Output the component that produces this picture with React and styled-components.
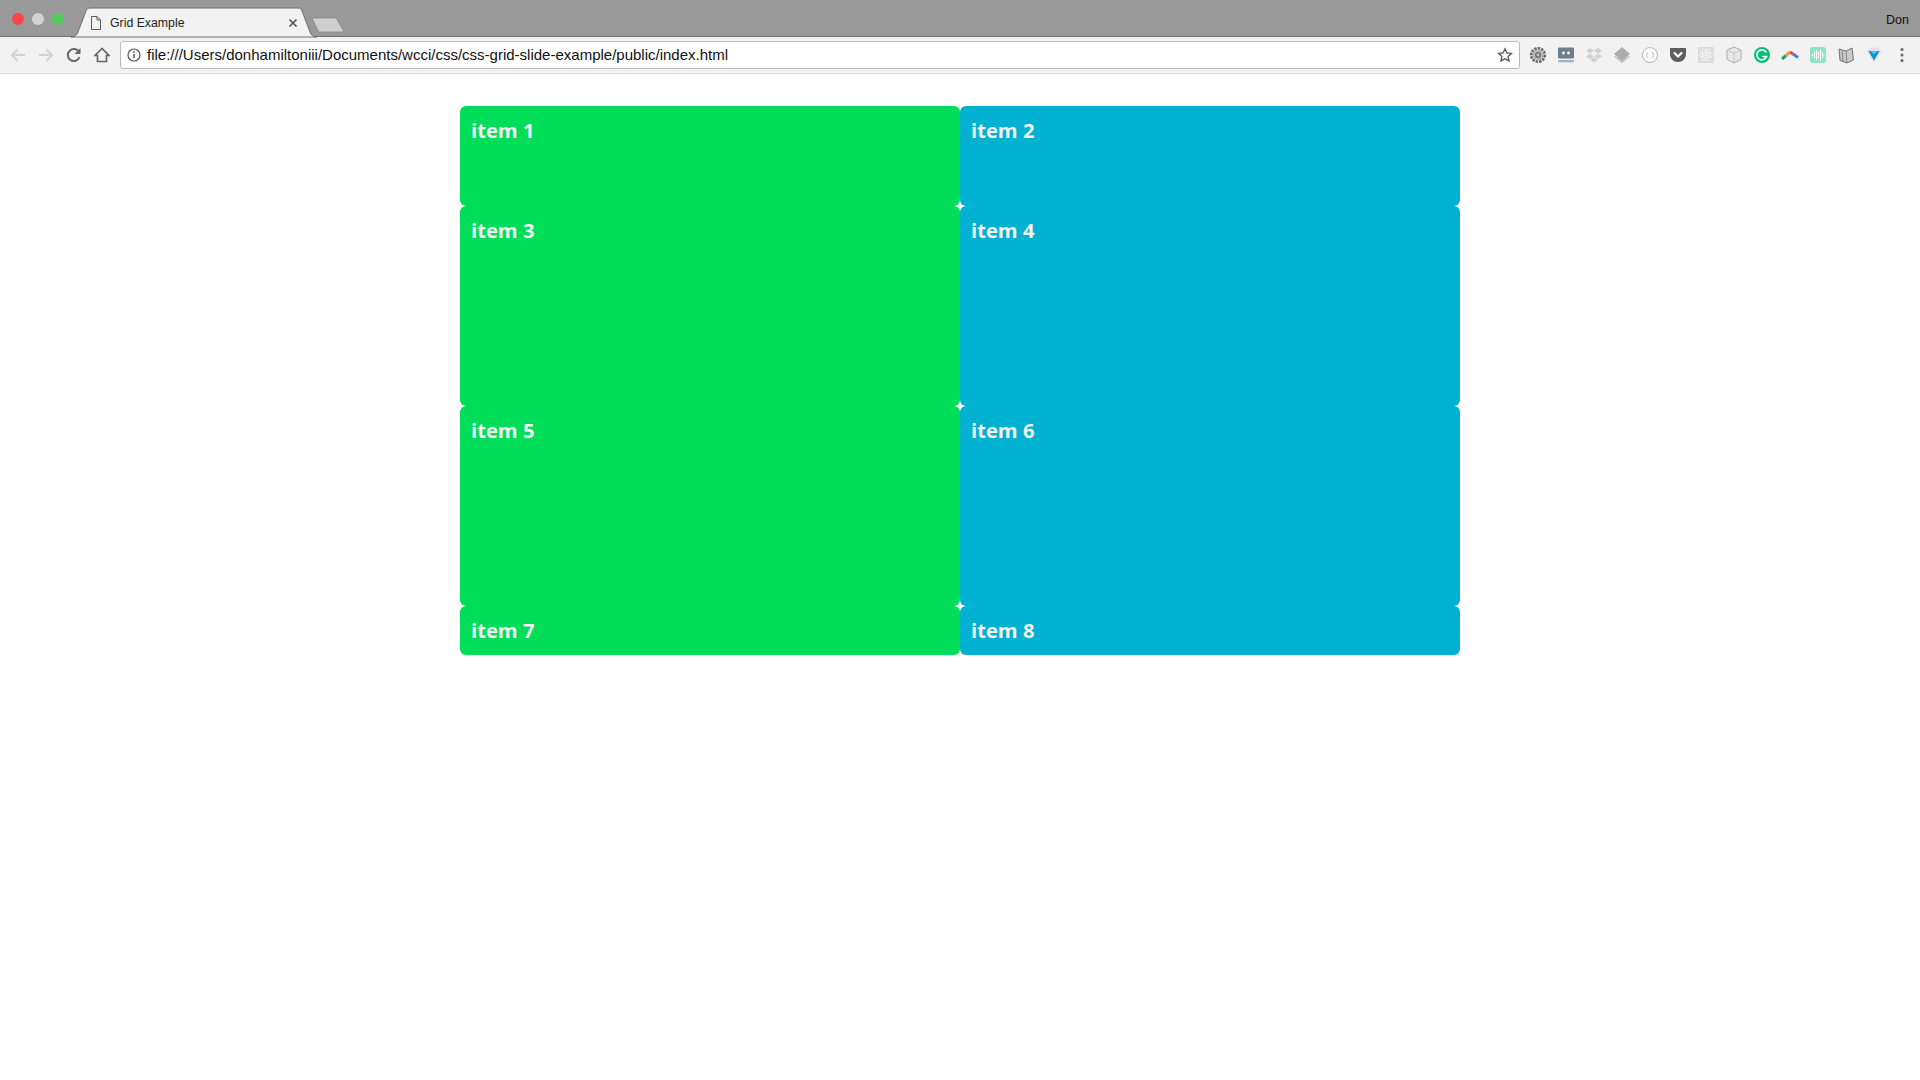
import styled, { createGlobalStyle } from "styled-components";

const GlobalStyle = createGlobalStyle`
  html, body {
    margin: 0;
    padding: 0;
    background: #fff;
    font-family: "Liberation Sans", Arial, sans-serif;
  }
`;

const items = [
  { label: "item 1", color: "#00de59" },
  { label: "item 2", color: "#00b1d2" },
  { label: "item 3", color: "#00de59" },
  { label: "item 4", color: "#00b1d2" },
  { label: "item 5", color: "#00de59" },
  { label: "item 6", color: "#00b1d2" },
  { label: "item 7", color: "#00de59" },
  { label: "item 8", color: "#00b1d2" },
];

const Icon = ({ children, size = 18 }) => (
  <svg width={size} height={size} viewBox="0 0 18 18" fill="none">
    {children}
  </svg>
);

const extensions = [
  // gear
  <Icon key="gear">
    <circle cx="9" cy="9" r="6.600" stroke="#666" strokeWidth="3" strokeDasharray="2.400 1" />
    <circle cx="9" cy="9" r="5.800" fill="#b5b5b5" />
    <circle cx="9" cy="9" r="3" fill="#707070" />
    <circle cx="9" cy="9" r="1.400" fill="#c9c9c9" />
  </Icon>,
  // robot face
  <Icon key="face">
    <rect x="1" y="1.500" width="16" height="11" rx="1" fill="#6d7f8c" />
    <circle cx="6.500" cy="7" r="1.400" fill="#fff" />
    <circle cx="11.500" cy="7" r="1.400" fill="#fff" />
    <rect x="1" y="14" width="16" height="2.200" rx="1" fill="#a5b0b8" />
  </Icon>,
  // dropbox
  <Icon key="dropbox">
    <path d="M5 2l4 2.600L5 7.400 1 4.800zM13 2l4 2.800-4 2.600-4-2.800zM5 7.800l4 2.600-4 2.600-4-2.600zM13 7.800l4 2.600-4 2.600-4-2.600zM5 13.800l4-2.400 4 2.400-4 2.600z" fill="#cfcfcf" />
  </Icon>,
  // layers
  <Icon key="layers">
    <path d="M2.500 10L9 15l6.500-5L17 10.500l-8 6.500-8-6.500z" fill="#bdbdbd" />
    <path d="M9 1l8 7-8 7-8-7z" fill="#ababab" />
  </Icon>,
  // braces in circle
  <Icon key="braces">
    <circle cx="9" cy="9" r="7.500" fill="#fdfdfd" stroke="#b5b5b5" />
    <path d="M7 6.500C6 6.500 6 7 6 8s-.6 1-.6 1 .6 0 .6 1 0 1.500 1 1.500M11 6.500c1 0 1 .5 1 1.500s.6 1 .6 1-.6 0-.6 1 0 1.500-1 1.500" stroke="#a8a8a8" strokeWidth=".8" />
  </Icon>,
  // pocket
  <Icon key="pocket">
    <path d="M1 2h16v6c0 4.500-3.600 8-8 8s-8-3.500-8-8z" fill="#5e5e5e" />
    <path d="M5.500 7L9 10.500 12.500 7" stroke="#fff" strokeWidth="2.200" strokeLinecap="round" />
  </Icon>,
  // react
  <Icon key="react">
    <rect x="1" y="1" width="16" height="16" fill="#dcdcdc" />
    <g stroke="#f5f5f5" strokeWidth=".9">
      <ellipse cx="9" cy="9" rx="6.500" ry="2.600" />
      <ellipse cx="9" cy="9" rx="6.500" ry="2.600" transform="rotate(60 9 9)" />
      <ellipse cx="9" cy="9" rx="6.500" ry="2.600" transform="rotate(120 9 9)" />
    </g>
    <circle cx="9" cy="9" r="1.300" fill="#f5f5f5" />
  </Icon>,
  // cube
  <Icon key="cube">
    <path d="M9 1l7 3v9.500L9 17l-7-3.500V4z" fill="#e8e8e8" stroke="#aaa" />
    <path d="M2 4l7 3 7-3M9 7v10" stroke="#c6c6c6" />
  </Icon>,
  // grammarly
  <Icon key="grammarly">
    <circle cx="9" cy="9" r="8" fill="#07bd79" />
    <path d="M13 6a5 5 0 1 0 .6 4.500H10" stroke="#fff" strokeWidth="1.600" strokeLinecap="round" />
  </Icon>,
  // rainbow arc
  <Icon key="arc">
    <path d="M1 13L5 9.500" stroke="#2f9e6a" strokeWidth="3" />
    <path d="M5 9.500L9 6" stroke="#e8a33a" strokeWidth="3" />
    <path d="M9 6L12 8" stroke="#dd4b4b" strokeWidth="3" />
    <path d="M12 8L17 11.500" stroke="#3d7fd9" strokeWidth="3" />
  </Icon>,
  // wave
  <Icon key="wave">
    <rect x="1" y="1" width="16" height="16" rx="2.500" fill="#8fe3c5" />
    <path d="M3.500 8v2M5.500 6v6M7.500 4v10M9.500 5.500v7M11.500 3.500v11M13.500 6.500v5M15 8.500v1" stroke="#fff" strokeWidth="1.100" />
  </Icon>,
  // book
  <Icon key="book">
    <path d="M2 3l7 2 6-3 1.500 12-6.500 3-7-2.500z" fill="#c9c9c9" stroke="#666" strokeWidth=".9" />
    <path d="M9 5l1 12M5 4.500l1 10.500" stroke="#777" strokeWidth=".8" />
  </Icon>,
  // blue Y shield
  <Icon key="shield">
    <path d="M1.500 5l4-3.500h7l4 3.500L9 17z" fill="#e2e2e2" />
    <path d="M3.500 5h11L9 14.500z" fill="#0b8fd3" />
    <path d="M5.500 5h7L9 8.500z" fill="#48c4ee" />
  </Icon>,
  // menu
  <Icon key="menu">
    <circle cx="9" cy="3.500" r="1.500" fill="#666" />
    <circle cx="9" cy="9" r="1.500" fill="#666" />
    <circle cx="9" cy="14.500" r="1.500" fill="#666" />
  </Icon>,
];

export default function App() {
  return (
    <>
      <GlobalStyle />
      <Browser>
        <TabBar>
          <Lights>
            <Light $color="#f9464d" />
            <Light $color="#d2d2d2" />
            <Light $color="#54cb58" />
          </Lights>
          <Tab>
            <TabShape viewBox="0 0 246 29" preserveAspectRatio="none">
              <path
                d="M0 29c4 0 6-2 7-5L15 3c.6-2 2-3 4-3h208c2 0 3.400 1 4 3l8 21c1 3 3 5 7 5z"
                fill="#f2f2f2"
                stroke="#6f6f6f"
              />
            </TabShape>
            <TabFile>
              <svg width="12" height="14" viewBox="0 0 12 14" fill="none">
                <path d="M1.500.5h5.500l3.500 3.500v9.500h-9zM7 .5V4h3.500" stroke="#5a5a5a" />
              </svg>
            </TabFile>
            <TabTitle>Grid Example</TabTitle>
            <TabClose>
              <svg width="10" height="10" viewBox="0 0 10 10">
                <path d="M1.500 1.500l7 7M8.500 1.500l-7 7" stroke="#555" strokeWidth="1.700" />
              </svg>
            </TabClose>
          </Tab>
          <NewTab>
            <svg width="34" height="16" viewBox="0 0 34 16">
              <path
                d="M1 1h23c1 0 1.600.5 2 1.500L32 13c.6 1.200 0 2-1.200 2H9c-1 0-1.600-.5-2-1.500L1 1z"
                fill="#cfcfcf"
                stroke="#888"
                strokeWidth=".8"
              />
            </svg>
          </NewTab>
          <UserName>Don</UserName>
        </TabBar>
        <Toolbar>
          <NavButtons>
            <NavButton>
              <svg width="16" height="14" viewBox="0 0 16 14" fill="none">
                <path d="M15 7H2M7.500 1.500L2 7l5.500 5.500" stroke="#d2d2d2" strokeWidth="1.800" />
              </svg>
            </NavButton>
            <NavButton>
              <svg width="16" height="14" viewBox="0 0 16 14" fill="none">
                <path d="M1 7h13M8.500 1.500L14 7l-5.500 5.500" stroke="#d2d2d2" strokeWidth="1.800" />
              </svg>
            </NavButton>
            <NavButton>
              <svg width="16" height="16" viewBox="0 0 16 16" fill="none">
                <path d="M13.500 10a6 6 0 1 1-.5-5" stroke="#666" strokeWidth="2" />
                <path d="M14.500 1v6h-6z" fill="#666" />
              </svg>
            </NavButton>
            <NavButton>
              <svg width="16" height="16" viewBox="0 0 16 16" fill="none">
                <path d="M8 1.500L1 8.500h2.500v6h9v-6H15z" stroke="#666" strokeWidth="1.700" strokeLinejoin="miter" />
              </svg>
            </NavButton>
          </NavButtons>
          <AddressBar>
            <InfoIcon>
              <svg width="14" height="14" viewBox="0 0 14 14" fill="none">
                <circle cx="7" cy="7" r="6" stroke="#555" strokeWidth="1.200" />
                <path d="M7 6v4.200" stroke="#555" strokeWidth="1.500" />
                <circle cx="7" cy="4" r=".9" fill="#555" />
              </svg>
            </InfoIcon>
            <Url>file:///Users/donhamiltoniii/Documents/wcci/css/css-grid-slide-example/public/index.html</Url>
            <svg width="16" height="16" viewBox="0 0 16 16" fill="none">
              <path
                d="M8 1.800l1.900 4.100 4.500.5-3.300 3 .9 4.500L8 11.700l-4 2.200.9-4.500-3.300-3 4.500-.5z"
                stroke="#555"
                strokeWidth="1.300"
              />
            </svg>
          </AddressBar>
          <Extensions>
            {extensions.map((icon) => (
              <Extension key={icon.key}>{icon}</Extension>
            ))}
          </Extensions>
        </Toolbar>
        <Main>
          <Grid>
            {items.map((item) => (
              <Item key={item.label} $color={item.color}>
                {item.label}
              </Item>
            ))}
          </Grid>
        </Main>
      </Browser>
    </>
  );
}

const Browser = styled.div`
  display: flex;
  flex-direction: column;
  min-height: 100vh;
`;

const TabBar = styled.div`
  display: flex;
  align-items: flex-end;
  height: 36px;
  background: #999;
  border-bottom: 1px solid #6f6f6f;
`;

const Lights = styled.div`
  display: flex;
  align-self: flex-start;
  flex-shrink: 0;
  gap: 8px;
  padding: 13px 0 0 12px;
  width: 71px;
  box-sizing: border-box;
`;

const Light = styled.span`
  width: 12px;
  height: 12px;
  flex-shrink: 0;
  border-radius: 50%;
  background: ${(p) => p.$color};
`;

const Tab = styled.div`
  position: relative;
  display: flex;
  align-items: center;
  width: 246px;
  height: 29px;
  margin-bottom: -1px;
  padding-left: 19px;
  box-sizing: border-box;
  flex-shrink: 0;
`;

const TabShape = styled.svg`
  position: absolute;
  left: 0;
  top: 0;
  width: 100%;
  height: 100%;
  overflow: visible;
`;

const TabFile = styled.span`
  position: relative;
  display: flex;
  margin-right: 8px;
`;

const TabTitle = styled.span`
  position: relative;
  flex: 1;
  font-size: 12.3px;
  color: #222;
`;

const TabClose = styled.span`
  position: relative;
  display: flex;
  margin-right: 19px;
`;

const NewTab = styled.div`
  display: flex;
  margin: 0 0 3px -6px;
`;

const UserName = styled.span`
  margin-left: auto;
  align-self: center;
  padding-right: 11px;
  font-size: 12.5px;
  color: #111;
  position: relative;
  top: 2px;
`;

const Toolbar = styled.div`
  display: flex;
  align-items: center;
  height: 37px;
  box-sizing: border-box;
  background: #f2f2f2;
  border-bottom: 1px solid #dadada;
`;

const NavButtons = styled.div`
  display: flex;
  width: 120px;
  padding-left: 4px;
  box-sizing: border-box;
`;

const NavButton = styled.span`
  display: flex;
  align-items: center;
  justify-content: center;
  width: 28px;
  height: 20px;
`;

const AddressBar = styled.div`
  display: flex;
  align-items: center;
  width: 1400px;
  height: 28px;
  box-sizing: border-box;
  padding: 0 6px 0 0;
  background: #fff;
  border: 1px solid #b9b9b9;
  border-radius: 3px;
`;

const InfoIcon = styled.span`
  display: flex;
  padding: 0 6px 0 6px;
`;

const Url = styled.span`
  flex: 1;
  font-size: 15px;
  line-height: 24px;
  margin-bottom: 1px;
  color: #111;
  white-space: nowrap;
`;

const Extensions = styled.div`
  display: flex;
  padding-left: 4px;
`;

const Extension = styled.span`
  display: flex;
  align-items: center;
  justify-content: center;
  width: 28px;
  height: 20px;
`;

const Main = styled.main`
  display: flex;
  justify-content: center;
  padding-top: 32px;
`;

const Grid = styled.div`
  display: grid;
  width: 1000px;
  grid-template-columns: 1fr 1fr;
  grid-template-rows: 100px 200px 200px 49px;
`;

const Item = styled.div`
  background: ${(p) => p.$color};
  border-radius: 6px;
  padding: 10px 11px;
  box-sizing: border-box;
  font-family: "Open Sans", sans-serif;
  font-weight: 700;
  font-size: 20.2px;
  line-height: 28px;
  color: #f2f2f2;
`;
